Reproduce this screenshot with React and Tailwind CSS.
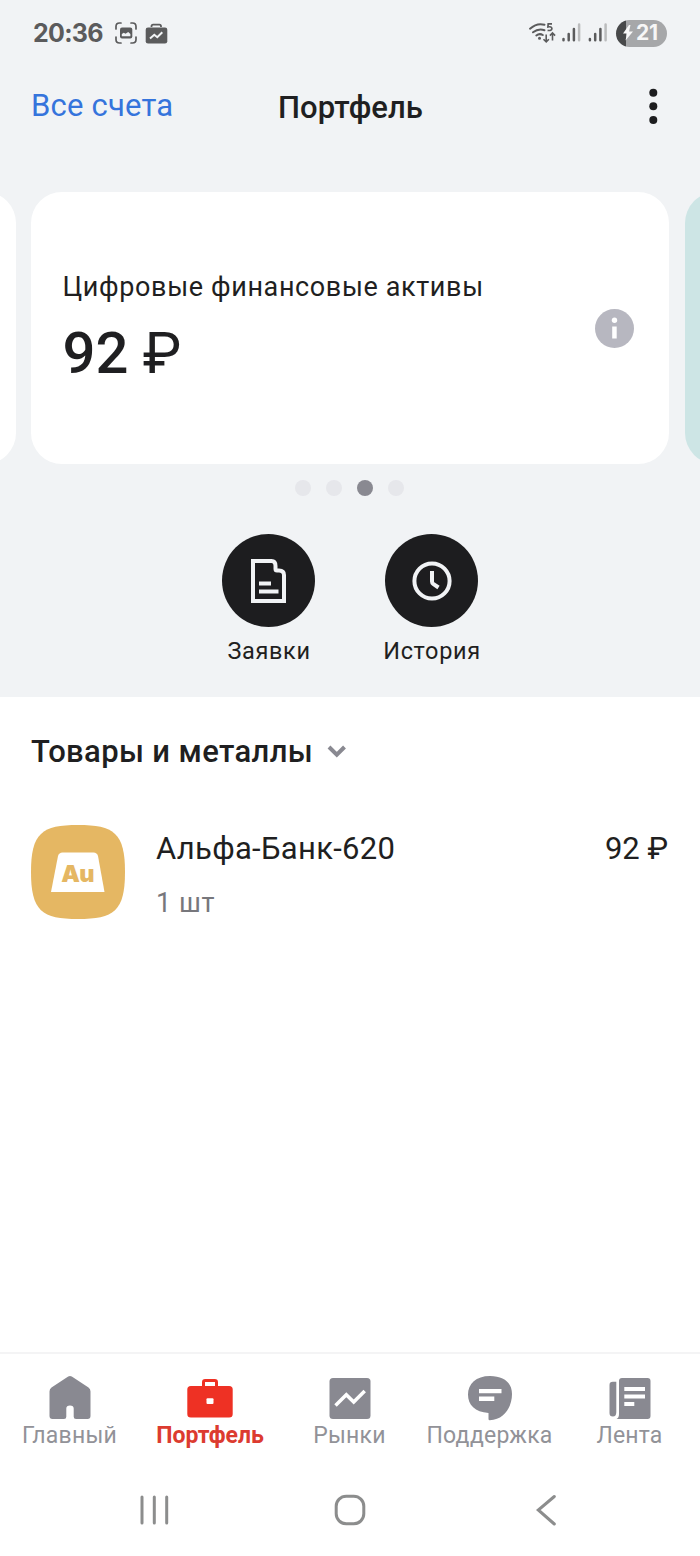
import React from "react";

function StatusBar() {
  return (
    <div className="flex h-[66px] items-center justify-between pl-[33px] pr-[33px]">
      <div className="flex items-center">
        <span className="w-[81px] whitespace-nowrap font-['Inter'] text-[25px] font-bold leading-8 tracking-[-0.7px] text-[#5b5b5c]">20:36</span>
        <svg className="h-[24px] w-[24px]" viewBox="0 0 24 24" fill="none">
          <path d="M2 8V5.500Q2 2 5.500 2H7M17 2h1.500Q22 2 22 5.500V8M22 16v2.500Q22 22 18.500 22H17M7 22H5.500Q2 22 2 18.500V16" stroke="#5b5b5c" strokeWidth="1.700" strokeLinecap="round" />
          <rect x="6" y="6.500" width="12.300" height="11" rx="2" fill="#5b5b5c" />
          <path d="M7.800 15.300v-2.300l2-1.300 1.700 1.100 2.700-1.900 2.200 2v2.400z" fill="#f1f3f5" />
        </svg>
        <svg className="ml-[7px] h-[24px] w-[23px]" viewBox="0 0 23 24" fill="none">
          <path d="M6.500 6V5.200Q6.500 3.600 8.200 3.600h6.200Q16 3.600 16 5.200V6" stroke="#5b5b5c" strokeWidth="1.800" />
          <rect x="0.700" y="6.500" width="21.600" height="16" rx="2.300" fill="#5b5b5c" />
          <path d="M5 17.500l4.300-3.800 3 2.500 5-5" stroke="#f1f3f5" strokeWidth="2" />
        </svg>
      </div>
      <div className="flex items-center">
        <svg className="h-[26px] w-[80px]" viewBox="0 0 80 26" fill="none">
          <g stroke="#5b5b5c" strokeWidth="2" strokeLinecap="round">
            <path d="M2 8.700Q9 2.500 16.500 4.800" />
            <path d="M5 12.300Q10.500 8 16.500 10.200" />
            <path d="M8.300 15.500Q11.500 13 14.800 15" />
          </g>
          <circle cx="11.500" cy="18.300" r="1.500" fill="#5b5b5c" />
          <path d="M24 3.800h-3.800l-.3 3.200q3.900-.9 4 1.600 0 2.500-4.300 1.700" stroke="#5b5b5c" strokeWidth="1.700" />
          <path d="M18.200 14.500v7.500M15.500 19.200l2.700 2.700 2.700-2.700M24.500 20.500v-7.300M21.900 15.600l2.600-2.600 2.600 2.600" stroke="#5b5b5c" strokeWidth="1.600" />
          <g strokeWidth="2.500" strokeLinecap="round">
            <path d="M35.500 19v1.300M40.700 14v6.300M45.900 9v11.300M61.900 19v1.300M67.200 14v6.300M72.400 9v11.300" stroke="#5b5b5c" />
            <path d="M51.100 4.500v15.800M77.600 4.500v15.800" stroke="#bbbcbd" />
          </g>
        </svg>
        <div className="ml-2 flex h-[27px] w-[51px] items-center overflow-hidden rounded-full bg-linear-to-r from-[#48494a] from-[20%] to-[#a6a7a9] to-[20%]">
          <svg className="ml-[6px] h-4 w-3" viewBox="0 0 12 16">
            <path d="M7 0 1 8.500h4L3.500 15.500 11 6.500H7L8.500 0z" fill="#f8f8f8" />
          </svg>
          <span className="ml-[2px] font-['Inter'] text-[21px] font-bold leading-6 tracking-[-0.3px] text-[#f6f6f6]">21</span>
        </div>
      </div>
    </div>
  );
}

function NavBar() {
  return (
    <div className="grid h-20 grid-cols-[1fr_auto_1fr] items-center pl-[31px] pr-[30px]">
      <span className="pb-px text-[31px] leading-10 tracking-[0.2px] text-[#3574dc]">Все счета</span>
      <span className="pt-[3px] text-[31px] font-medium leading-10 tracking-[0.1px]">Портфель</span>
      <svg className="h-10 w-[34px] justify-self-end" viewBox="0 0 34 40" fill="#1d1d1f">
        <circle cx="17.300" cy="6.700" r="4" />
        <circle cx="17.300" cy="20.300" r="4" />
        <circle cx="17.300" cy="34" r="4" />
      </svg>
    </div>
  );
}

function Cards() {
  return (
    <div className="mt-[46px] flex h-[272px] justify-center gap-[15.500px] overflow-hidden">
      <div className="w-[638px] shrink-0 rounded-[31px] bg-white" />
      <div className="flex w-[638px] shrink-0 items-center justify-between rounded-[31px] bg-white pl-[31.500px] pr-[35px]">
        <div>
          <div className="text-[27px] leading-9 tracking-[0.62px]">Цифровые финансовые активы</div>
          <div className="mt-[14px] text-[58px] font-medium leading-[68px]">
            92 <span className="font-normal">₽</span>
          </div>
        </div>
        <svg className="h-[39px] w-[39px]" viewBox="0 0 39 39">
          <circle cx="19.500" cy="19.500" r="19.500" fill="#b7b7c0" />
          <circle cx="19.500" cy="11.200" r="2.700" fill="#fff" />
          <path d="M17.200 17.500h4.500v12h-4.500z" fill="#fff" />
        </svg>
      </div>
      <div className="w-[638px] shrink-0 rounded-[31px] bg-[#cde5e5]" />
    </div>
  );
}

function Action({ label, children }) {
  return (
    <div className="flex w-[163px] flex-col items-center">
      <div className="flex h-[93px] w-[93px] items-center justify-center rounded-full bg-[#1d1d1f]">
        <svg className="h-12 w-12" viewBox="0 0 48 48" fill="none" stroke="#f1f3f5">{children}</svg>
      </div>
      <span className="mt-[9px] pl-px text-[23.500px] leading-[30px] tracking-[0.65px]">{label}</span>
    </div>
  );
}

const icons = {
  home: <path d="M22.200 2.600q1.800-1.100 3.600 0L42.500 13.500q2 1.500 2 4V42q0 3-3 3H30q-2.300 0-2.300-2.300V34.500q0-3-3.700-3t-3.700 3v8.200Q20.300 45 18 45H6.500q-3 0-3-3V17.500q0-2.500 2-4z" />,
  portfolio: (
    <>
      <path d="M17.500 14V8.200q0-1.700 1.700-1.700h9.600q1.700 0 1.700 1.700V14" fill="none" stroke="currentColor" strokeWidth="3" />
      <rect x="1.300" y="12" width="45.400" height="31.500" rx="3.500" />
      <rect x="20.500" y="24.200" width="7" height="5.800" rx="1" fill="#fff" />
    </>
  ),
  markets: (
    <>
      <rect x="3.500" y="4" width="41" height="41" rx="3.500" />
      <path d="M9.500 31.500 20.300 20.700l7.400 7.400L38.700 17" fill="none" stroke="#fff" strokeWidth="3.500" />
    </>
  ),
  support: (
    <>
      <path d="M24 2C38 2 46 9 46 20c0 12-7 26-22.300 26.300q-1.200 0-1.200-1.200V39C9 38 2 31 2 20.500S10 2 24 2z" />
      <path d="M13 15h22.500v4.300H13zM13 22.600h15.300v4.300H13z" fill="#fff" />
    </>
  ),
  feed: (
    <>
      <path d="M3.500 11q0-3.300 3.300-3.300h3.500V38q0 4.500-3.400 4.500T3.500 39z" />
      <path d="M13 7q0-3 3-3h25.500q3 0 3 3v35q0 3-3 3H10.500Q13 44 13 40z" />
      <path d="M18.300 13H39v4H18.300zM18.300 20.500H39v4H18.300zM18.300 28h10v4h-10z" fill="#fff" />
    </>
  ),
};

function Tab({ icon, label, active }) {
  return (
    <div className={active ? "flex w-[140px] flex-col items-center text-[#ee3124]" : "flex w-[140px] flex-col items-center text-[#898991]"}>
      <svg className="h-12 w-12" viewBox="0 0 48 48" fill="currentColor">{icons[icon]}</svg>
      <span className={active ? "whitespace-nowrap text-[23px] font-bold leading-7 text-[#dc3b30]" : "whitespace-nowrap pr-px text-[23px] leading-7 tracking-[0.2px] text-[#929298]"}>{label}</span>
    </div>
  );
}

export default function App() {
  return (
    <div className="flex h-[1556px] w-[700px] flex-col overflow-hidden bg-white font-['Roboto',sans-serif] text-[#1f1f21]">
      <header className="h-[697px] shrink-0 bg-[#f1f3f5]">
        <StatusBar />
        <NavBar />
        <Cards />
        <div className="mt-4 flex justify-center gap-[15px] pr-px">
          <i className="h-4 w-4 rounded-full bg-[#e6e7eb]" />
          <i className="h-4 w-4 rounded-full bg-[#e6e7eb]" />
          <i className="h-4 w-4 rounded-full bg-[#898991]" />
          <i className="h-4 w-4 rounded-full bg-[#e6e7eb]" />
        </div>
        <div className="mt-[38px] flex justify-center">
          <Action label="Заявки">
            <path d="M8 4h18.500q4 0 4 5v3q0 1.500 1.500 1.500h2q5 0 5 4.500v26H8z" strokeWidth="4" />
            <path d="M14 26.500h12M14 34.500h19.500" strokeWidth="4" />
          </Action>
          <Action label="История">
            <circle cx="24" cy="24" r="17.600" strokeWidth="4" />
            <path d="M24 14v10.500q0 1.500 1.200 2.400l5.300 3.600" strokeWidth="4" />
          </Action>
        </div>
      </header>

      <main className="flex-1 px-[31px] pt-[34px]">
        <div className="flex items-center">
          <h2 className="pt-px text-[31px] font-medium leading-10 tracking-[0.37px]">Товары и металлы</h2>
          <svg className="mb-px ml-[14px] h-5 w-5" viewBox="0 0 20 20" fill="none">
            <path d="M2 6l7.800 7.700L17.500 6" stroke="#898991" strokeWidth="4" />
          </svg>
        </div>
        <div className="mt-[53px] flex">
          <svg className="h-[94px] w-[94px]" viewBox="0 0 94 94">
            <path d="M47 0C83 0 94 8 94 47S83 94 47 94 0 86 0 47 11 0 47 0z" fill="#e5b763" />
            <path d="M31.500 27.500h31q3.500 0 4.500 3.500l6.500 36h-53.500l7-36q1-3.500 4.500-3.500z" fill="#fff" />
            <text x="46.500" y="56.500" textAnchor="middle" fill="#e5b763" className="font-['Inter'] text-[23.500px] font-black tracking-[-0.8px]">Au</text>
          </svg>
          <div className="ml-[31px] flex-1 pt-1">
            <div className="text-[31px] leading-10 tracking-[0.3px]">Альфа-Банк-620</div>
            <div className="mt-4 text-[27px] leading-9 tracking-[0.6px] text-[#77777c]">1 шт</div>
          </div>
          <div className="pr-px pt-1 text-[31px] leading-10">92 ₽</div>
        </div>
      </main>

      <nav className="flex h-[112px] shrink-0 border-t-2 border-[#f4f4f5] pt-5">
        <Tab icon="home" label="Главный" />
        <Tab icon="portfolio" label="Портфель" active />
        <Tab icon="markets" label="Рынки" />
        <Tab icon="support" label="Поддержка" />
        <Tab icon="feed" label="Лента" />
      </nav>
      <div className="flex h-[92px] shrink-0 items-start justify-between px-[134px] pt-[26px]">
        <svg className="h-10 w-10" viewBox="0 0 40 40" stroke="#8c8d8d" strokeWidth="3" strokeLinecap="round">
          <path d="M8 7v26M20.300 7v26M32.700 7v26" />
        </svg>
        <svg className="h-10 w-10" viewBox="0 0 40 40" fill="none" stroke="#8c8d8d" strokeWidth="3">
          <rect x="6.200" y="6.200" width="27.600" height="27.600" rx="10" />
        </svg>
        <svg className="h-10 w-10" viewBox="0 0 40 40" fill="none" stroke="#8c8d8d" strokeWidth="3" strokeLinecap="round">
          <path d="M28.300 6.500 12.300 20l16 14" />
        </svg>
      </div>
    </div>
  );
}
